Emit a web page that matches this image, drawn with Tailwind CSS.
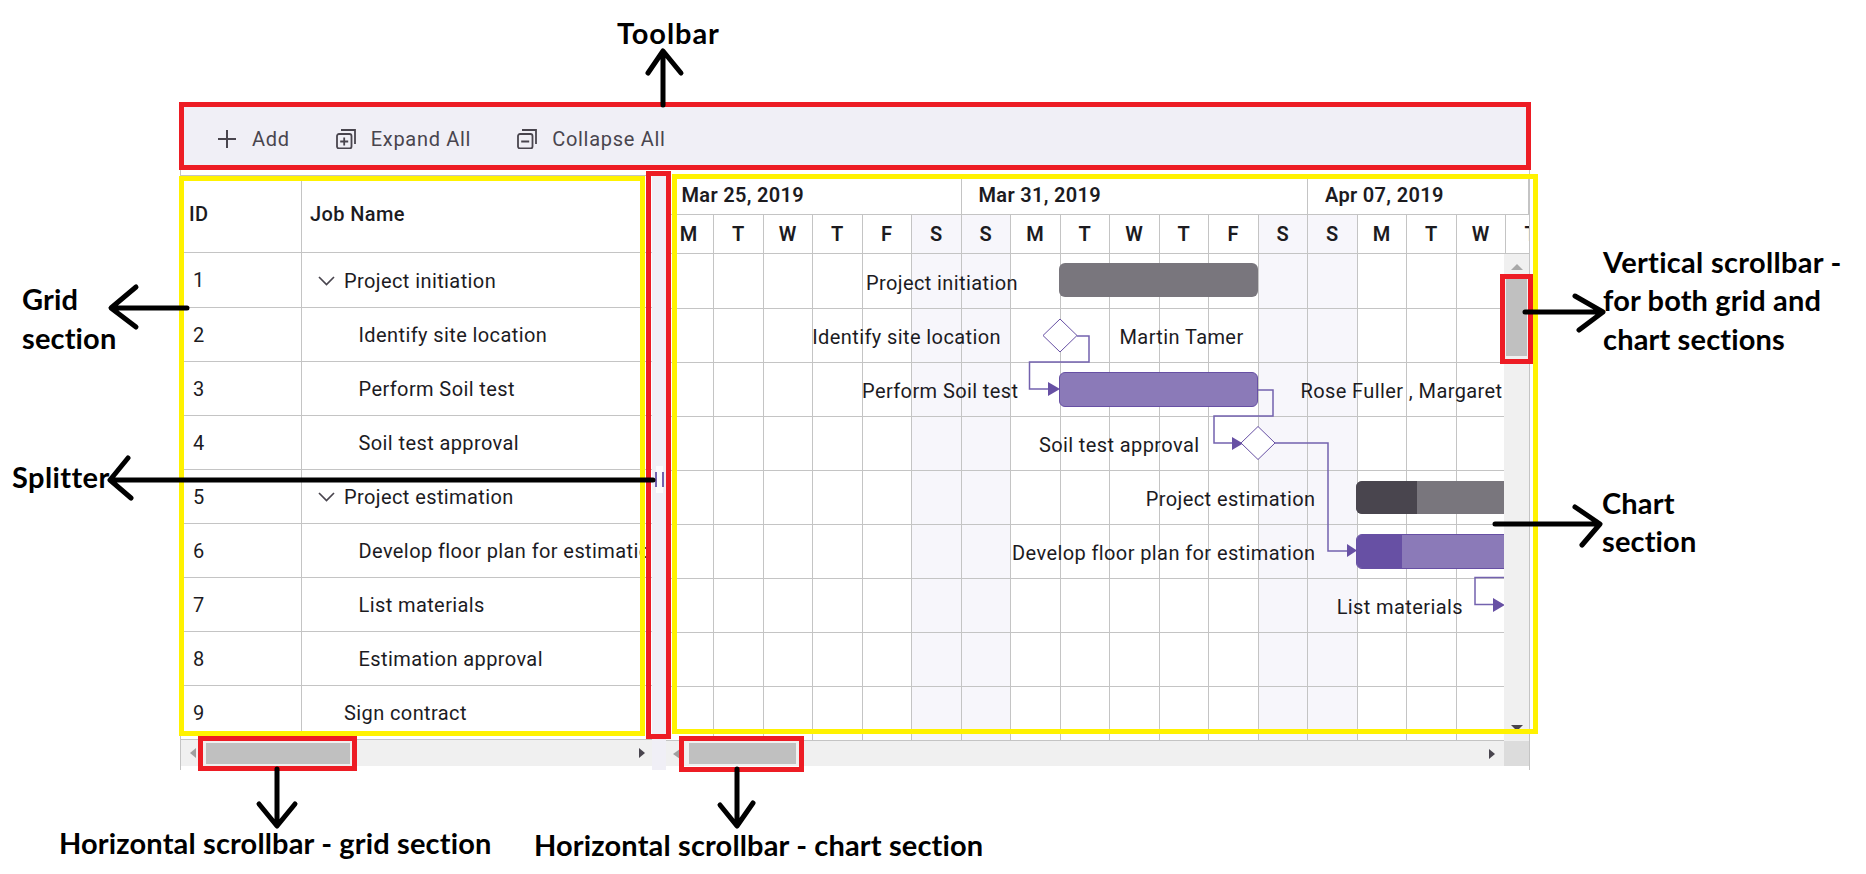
<!DOCTYPE html>
<html lang="en">
<head>
  <meta charset="UTF-8">
  <title>Gantt chart parts</title>
  <script src="https://cdn.jsdelivr.net/npm/@tailwindcss/browser@4"></script>
</head>
<body class="bg-white">
<div class="relative w-[1866px] h-[874px] overflow-hidden pt-[102px] pl-[180px] font-['Roboto',sans-serif] text-[20px] tracking-[0.4px] text-[#1c1b1f]">

  <!-- gantt -->
  <div class="w-[1350px] border-x border-[#c4c4c4]">
    <!-- toolbar -->
    <div class="h-[68px] pt-[5px] bg-[#f0eff6] flex items-center pl-[37px] gap-[46px] text-[#49454e] tracking-[0.7px]">
      <div class="flex items-center gap-[16px]">
        <svg width="18" height="18" viewBox="0 0 18 18" fill="none" stroke="#49454e" stroke-width="2"><path d="M9 0v18M0 9h18"/></svg>
        <span>Add</span>
      </div>
      <div class="flex items-center gap-[15px]">
        <svg width="20" height="20" viewBox="0 0 20 20" fill="none" stroke="#49454e" stroke-width="1.8"><rect x="1" y="5" width="14.5" height="14.5" rx="2"/><path d="M5 1h14v14M8.2 8.5v8M4.2 12.5h8"/></svg>
        <span>Expand All</span>
      </div>
      <div class="flex items-center gap-[15px]">
        <svg width="20" height="20" viewBox="0 0 20 20" fill="none" stroke="#49454e" stroke-width="1.8"><rect x="1" y="5" width="14.5" height="14.5" rx="2"/><path d="M5 1h14v14M4.2 12.5h8"/></svg>
        <span>Collapse All</span>
      </div>
    </div>
    <div class="h-[5px]"></div>

    <div class="flex h-[595px]">
      <!-- grid section -->
      <div class="w-[471px] flex flex-col">
        <div class="h-[78px] flex border-y border-[#c4c4c4] font-medium">
          <div class="w-[121px] border-r border-[#c4c4c4] pl-[8px] flex items-center">ID</div>
          <div class="pl-[8px] flex items-center">Job Name</div>
        </div>
        <div class="h-[55px] flex border-b border-[#c4c4c4] pt-[1px]">
          <div class="w-[121px] border-r border-[#c4c4c4] pl-[12px] flex items-center mt-[-1px]">1</div>
          <div class="w-[345px] pl-[16px] flex items-center gap-[9px] overflow-hidden whitespace-nowrap">
            <svg width="17" height="10" viewBox="0 0 17 10" fill="none" stroke="#49454e" stroke-width="1.7"><path d="M1 1l7.5 7.5L16 1"/></svg>
            <span>Project initiation</span>
          </div>
        </div>
        <div class="h-[54px] flex border-b border-[#c4c4c4] pt-[1px]">
          <div class="w-[121px] border-r border-[#c4c4c4] pl-[12px] flex items-center mt-[-1px]">2</div>
          <div class="w-[345px] pl-[56.5px] flex items-center overflow-hidden whitespace-nowrap">Identify site location</div>
        </div>
        <div class="h-[54px] flex border-b border-[#c4c4c4] pt-[1px]">
          <div class="w-[121px] border-r border-[#c4c4c4] pl-[12px] flex items-center mt-[-1px]">3</div>
          <div class="w-[345px] pl-[56.5px] flex items-center overflow-hidden whitespace-nowrap">Perform Soil test</div>
        </div>
        <div class="h-[54px] flex border-b border-[#c4c4c4] pt-[1px]">
          <div class="w-[121px] border-r border-[#c4c4c4] pl-[12px] flex items-center mt-[-1px]">4</div>
          <div class="w-[345px] pl-[56.5px] flex items-center overflow-hidden whitespace-nowrap">Soil test approval</div>
        </div>
        <div class="h-[54px] flex border-b border-[#c4c4c4] pt-[1px]">
          <div class="w-[121px] border-r border-[#c4c4c4] pl-[12px] flex items-center mt-[-1px]">5</div>
          <div class="w-[345px] pl-[16px] flex items-center gap-[9px] overflow-hidden whitespace-nowrap">
            <svg width="17" height="10" viewBox="0 0 17 10" fill="none" stroke="#49454e" stroke-width="1.7"><path d="M1 1l7.5 7.5L16 1"/></svg>
            <span>Project estimation</span>
          </div>
        </div>
        <div class="h-[54px] flex border-b border-[#c4c4c4] pt-[1px]">
          <div class="w-[121px] border-r border-[#c4c4c4] pl-[12px] flex items-center mt-[-1px]">6</div>
          <div class="w-[345px] pl-[56.5px] flex items-center overflow-hidden whitespace-nowrap">Develop floor plan for estimation</div>
        </div>
        <div class="h-[54px] flex border-b border-[#c4c4c4] pt-[1px]">
          <div class="w-[121px] border-r border-[#c4c4c4] pl-[12px] flex items-center mt-[-1px]">7</div>
          <div class="w-[345px] pl-[56.5px] flex items-center overflow-hidden whitespace-nowrap">List materials</div>
        </div>
        <div class="h-[54px] flex border-b border-[#c4c4c4] pt-[1px]">
          <div class="w-[121px] border-r border-[#c4c4c4] pl-[12px] flex items-center mt-[-1px]">8</div>
          <div class="w-[345px] pl-[56.5px] flex items-center overflow-hidden whitespace-nowrap">Estimation approval</div>
        </div>
        <div class="h-[54px] flex border-b border-[#c4c4c4] pt-[1px]">
          <div class="w-[121px] border-r border-[#c4c4c4] pl-[12px] flex items-center mt-[-1px]">9</div>
          <div class="w-[345px] pl-[42px] flex items-center overflow-hidden whitespace-nowrap">Sign contract</div>
        </div>
        <!-- grid scrollbar -->
        <div class="h-[26px] bg-[#f0f0f0] flex items-center">
          <svg class="ml-[9px]" width="6" height="10" viewBox="0 0 6 10"><path d="M6 0v10L0 5z" fill="#a0a0a0"/></svg>
          <div class="ml-[10px] w-[144px] h-[21px] bg-[#c0c0c0]"></div>
          <svg class="ml-auto mr-[7px]" width="6" height="10" viewBox="0 0 6 10"><path d="M0 0v10l6-5z" fill="#49454e"/></svg>
        </div>
      </div>

      <!-- splitter -->
      <div class="w-[14px] bg-[#f0eff6] flex flex-col items-center pt-[291px]">
        <div class="w-[7px] h-[27px] bg-[#fbfbfd]"></div>
      </div>

      <!-- chart section -->
      <div class="w-[863px] flex flex-col">
        <div class="h-[79px] overflow-hidden border-b border-[#c4c4c4] font-semibold tracking-[0.33px] text-[#1c1b1f]">
          <div class="h-[40px] flex ml-[-1.5px] border-b border-[#c4c4c4]">
            <div class="w-[297px] shrink-0 border-r border-[#c4c4c4] pl-[17px] flex items-center">Mar 25, 2019</div>
            <div class="w-[346.5px] shrink-0 border-r border-[#c4c4c4] pl-[17px] flex items-center">Mar 31, 2019</div>
            <div class="w-[221px] shrink-0 border-r border-[#c4c4c4] pl-[17px] flex items-center">Apr 07, 2019</div>
          </div>
          <div class="h-[38px] flex ml-[-1.5px] w-[866.5px] overflow-hidden border-r border-[#c4c4c4]">
            <div class="w-[49.5px] shrink-0 border-r border-[#c4c4c4] flex items-center justify-center">M</div>
            <div class="w-[49.5px] shrink-0 border-r border-[#c4c4c4] flex items-center justify-center">T</div>
            <div class="w-[49.5px] shrink-0 border-r border-[#c4c4c4] flex items-center justify-center">W</div>
            <div class="w-[49.5px] shrink-0 border-r border-[#c4c4c4] flex items-center justify-center">T</div>
            <div class="w-[49.5px] shrink-0 border-r border-[#c4c4c4] flex items-center justify-center">F</div>
            <div class="w-[49.5px] shrink-0 border-r border-[#c4c4c4] bg-[#f7f6fb] flex items-center justify-center">S</div>
            <div class="w-[49.5px] shrink-0 border-r border-[#c4c4c4] bg-[#f7f6fb] flex items-center justify-center">S</div>
            <div class="w-[49.5px] shrink-0 border-r border-[#c4c4c4] flex items-center justify-center">M</div>
            <div class="w-[49.5px] shrink-0 border-r border-[#c4c4c4] flex items-center justify-center">T</div>
            <div class="w-[49.5px] shrink-0 border-r border-[#c4c4c4] flex items-center justify-center">W</div>
            <div class="w-[49.5px] shrink-0 border-r border-[#c4c4c4] flex items-center justify-center">T</div>
            <div class="w-[49.5px] shrink-0 border-r border-[#c4c4c4] flex items-center justify-center">F</div>
            <div class="w-[49.5px] shrink-0 border-r border-[#c4c4c4] bg-[#f7f6fb] flex items-center justify-center">S</div>
            <div class="w-[49.5px] shrink-0 border-r border-[#c4c4c4] bg-[#f7f6fb] flex items-center justify-center">S</div>
            <div class="w-[49.5px] shrink-0 border-r border-[#c4c4c4] flex items-center justify-center">M</div>
            <div class="w-[49.5px] shrink-0 border-r border-[#c4c4c4] flex items-center justify-center">T</div>
            <div class="w-[49.5px] shrink-0 border-r border-[#c4c4c4] flex items-center justify-center">W</div>
            <div class="w-[49.5px] shrink-0 flex items-center justify-center">T</div>
          </div>
        </div>

        <div class="flex h-[487px]">
          <!-- timeline body -->
          <div class="relative w-[838px] overflow-hidden">
            <div class="absolute top-0 bottom-0 left-[-1.5px] flex">
              <div class="w-[49.5px] shrink-0 border-r border-[#c4c4c4]"></div>
              <div class="w-[49.5px] shrink-0 border-r border-[#c4c4c4]"></div>
              <div class="w-[49.5px] shrink-0 border-r border-[#c4c4c4]"></div>
              <div class="w-[49.5px] shrink-0 border-r border-[#c4c4c4]"></div>
              <div class="w-[49.5px] shrink-0 border-r border-[#c4c4c4]"></div>
              <div class="w-[49.5px] shrink-0 border-r border-[#c4c4c4] bg-[#f7f6fb]"></div>
              <div class="w-[49.5px] shrink-0 border-r border-[#c4c4c4] bg-[#f7f6fb]"></div>
              <div class="w-[49.5px] shrink-0 border-r border-[#c4c4c4]"></div>
              <div class="w-[49.5px] shrink-0 border-r border-[#c4c4c4]"></div>
              <div class="w-[49.5px] shrink-0 border-r border-[#c4c4c4]"></div>
              <div class="w-[49.5px] shrink-0 border-r border-[#c4c4c4]"></div>
              <div class="w-[49.5px] shrink-0 border-r border-[#c4c4c4]"></div>
              <div class="w-[49.5px] shrink-0 border-r border-[#c4c4c4] bg-[#f7f6fb]"></div>
              <div class="w-[49.5px] shrink-0 border-r border-[#c4c4c4] bg-[#f7f6fb]"></div>
              <div class="w-[49.5px] shrink-0 border-r border-[#c4c4c4]"></div>
              <div class="w-[49.5px] shrink-0 border-r border-[#c4c4c4]"></div>
              <div class="w-[49.5px] shrink-0 border-r border-[#c4c4c4]"></div>
            </div>
            <div class="relative">
              <div class="h-[55px] border-b border-[#c4c4c4]"></div>
              <div class="h-[54px] border-b border-[#c4c4c4]"></div>
              <div class="h-[54px] border-b border-[#c4c4c4]"></div>
              <div class="h-[54px] border-b border-[#c4c4c4]"></div>
              <div class="h-[54px] border-b border-[#c4c4c4]"></div>
              <div class="h-[54px] border-b border-[#c4c4c4]"></div>
              <div class="h-[54px] border-b border-[#c4c4c4]"></div>
              <div class="h-[54px] border-b border-[#c4c4c4]"></div>
              <div class="h-[54px] border-b border-[#c4c4c4]"></div>
            </div>

            <!-- taskbars -->
            <div class="absolute left-[393px] top-[9px] w-[199px] h-[34px] rounded-[6px] bg-[#79767d]"></div>
            <div class="absolute left-[393px] top-[118px] w-[199px] h-[35px] rounded-[6px] bg-[#8b7ab8] border border-[#6750a4]"></div>
            <div class="absolute left-[690px] top-[227px] w-[200px] h-[33px] rounded-[6px] bg-[#79767d] overflow-hidden"><div class="w-[61px] h-full bg-[#49454e]"></div></div>
            <div class="absolute left-[690px] top-[280px] w-[200px] h-[35px] rounded-[6px] bg-[#8b7ab8] border border-[#6750a4] overflow-hidden"><div class="w-[45px] h-full bg-[#6750a4]"></div></div>

            <!-- connectors and milestones -->
            <svg class="absolute left-0 top-0" width="838" height="486" viewBox="666 254 838 486" fill="none">
              <g stroke="#7362ae" stroke-width="1.5">
                <path d="M1077 336H1089V362H1029.5V389H1048"/>
                <path d="M1258 390H1273V416H1214V443H1232"/>
                <path d="M1275 443H1328V551H1347"/>
                <path d="M1504 577.5H1475V604.5H1493"/>
              </g>
              <g fill="#6750a4">
                <path d="M1048 382L1060 389L1048 396z"/>
                <path d="M1232 437L1243 443.5L1232 450z"/>
                <path d="M1347 544L1357 550.5L1347 557z"/>
                <path d="M1493 598L1505 605L1493 612z"/>
              </g>
              <path d="M1060 319L1077 335.5L1060 352L1043 335.5z" fill="#fff" stroke="#6750a4"/>
              <path d="M1258 426.5L1275 443L1258 459.5L1241 443z" fill="#fff" stroke="#6750a4"/>
            </svg>

            <!-- taskbar labels -->
            <span class="absolute right-[486px] top-[14px] leading-[30px] whitespace-nowrap">Project initiation</span>
            <span class="absolute right-[503px] top-[68px] leading-[30px] whitespace-nowrap">Identify site location</span>
            <span class="absolute left-[453.5px] top-[68px] leading-[30px] whitespace-nowrap">Martin Tamer</span>
            <span class="absolute right-[485.5px] top-[122px] leading-[30px] whitespace-nowrap">Perform Soil test</span>
            <span class="absolute left-[634.5px] top-[122px] leading-[30px] whitespace-nowrap">Rose Fuller , Margaret</span>
            <span class="absolute right-[304.5px] top-[176px] leading-[30px] whitespace-nowrap">Soil test approval</span>
            <span class="absolute right-[188.5px] top-[230px] leading-[30px] whitespace-nowrap">Project estimation</span>
            <span class="absolute right-[188.5px] top-[284px] leading-[30px] whitespace-nowrap">Develop floor plan for estimation</span>
            <span class="absolute right-[41px] top-[338px] leading-[30px] whitespace-nowrap">List materials</span>
          </div>

          <!-- vertical scrollbar -->
          <div class="w-[25px] bg-[#f0f0f0] flex flex-col items-center">
            <svg class="mt-[10px]" width="12" height="6" viewBox="0 0 12 6"><path d="M0 6h12L6 0z" fill="#a8a8a8"/></svg>
            <div class="mt-[9px] w-[21px] h-[77px] bg-[#c0c0c0]"></div>
            <svg class="mt-auto mb-[10px]" width="12" height="6" viewBox="0 0 12 6"><path d="M0 0h12L6 6z" fill="#49454e"/></svg>
          </div>
        </div>

        <!-- chart scrollbar -->
        <div class="flex h-[25px]">
          <div class="w-[838px] bg-[#f0f0f0] flex items-center">
            <svg class="ml-[7px]" width="7" height="10" viewBox="0 0 7 10"><path d="M7 0v10L0 5z" fill="#a0a0a0"/></svg>
            <div class="ml-[9px] w-[107px] h-[21px] bg-[#c0c0c0]"></div>
            <svg class="ml-auto mr-[9px]" width="6" height="10" viewBox="0 0 6 10"><path d="M0 0v10l6-5z" fill="#49454e"/></svg>
          </div>
          <div class="w-[25px] bg-[#dcdcdc]"></div>
        </div>
      </div>
    </div>
  </div>

  <!-- splitter grip -->
  <div class="absolute left-[654.5px] top-[472px] w-[2px] h-[15px] bg-[#7362ae]"></div>
  <div class="absolute left-[661.5px] top-[472px] w-[2px] h-[15px] bg-[#7362ae]"></div>

  <!-- annotation frames -->
  <div class="absolute left-[179px] top-[176px] w-[466px] h-[560px] border-[5px] border-[#fff200]"></div>
  <div class="absolute left-[672px] top-[174px] w-[866px] h-[560px] border-[5px] border-[#fff200]"></div>
  <div class="absolute left-[179px] top-[102px] w-[1352px] h-[68px] border-[5px] border-[#ed1c24]"></div>
  <div class="absolute left-[646px] top-[171px] w-[25px] h-[568px] border-[5px] border-[#ed1c24]"></div>
  <div class="absolute left-[1500px] top-[274px] w-[33px] h-[90px] border-[5px] border-[#ed1c24]"></div>
  <div class="absolute left-[198px] top-[736px] w-[159px] h-[35px] border-[5px] border-[#ed1c24]"></div>
  <div class="absolute left-[679px] top-[736px] w-[125px] h-[36px] border-[5px] border-[#ed1c24]"></div>

  <!-- annotation arrows -->
  <svg class="absolute left-0 top-0" width="1866" height="874" viewBox="0 0 1866 874" fill="none" stroke="#000" stroke-width="5" stroke-linecap="round" stroke-linejoin="round">
    <path d="M663 105V52M648 73L663 51L681 73"/>
    <path d="M187 308H112M136 287L111 308L136 327"/>
    <path d="M653 480H111M128 458L110 480L131 498"/>
    <path d="M277 769V825M259 804L277 826L295 804"/>
    <path d="M737 769V825M720 805L737 826L753 803"/>
    <path d="M1525 312H1602M1575 296L1603 312L1579 330"/>
    <path d="M1495 524H1599M1575 507L1600 524L1582 545"/>
  </svg>

  <!-- annotation labels -->
  <div class="font-['Lato',sans-serif] font-bold text-black text-[29px] leading-[30px] tracking-[0.15px]">
    <span class="absolute left-[617px] top-[18px] tracking-[0.9px]">Toolbar</span>
    <span class="absolute left-[22px] top-[284px]">Grid</span>
    <span class="absolute left-[22px] top-[323px]">section</span>
    <span class="absolute left-[12px] top-[462px] tracking-[0.4px]">Splitter</span>
    <span class="absolute left-[1603px] top-[247px] whitespace-nowrap tracking-[0.3px]">Vertical scrollbar -</span>
    <span class="absolute left-[1603px] top-[285px] whitespace-nowrap">for both grid and</span>
    <span class="absolute left-[1603px] top-[324px] whitespace-nowrap">chart sections</span>
    <span class="absolute left-[1602px] top-[488px]">Chart</span>
    <span class="absolute left-[1602px] top-[526px]">section</span>
    <span class="absolute left-[59px] top-[828px] whitespace-nowrap">Horizontal scrollbar - grid section</span>
    <span class="absolute left-[534px] top-[830px] whitespace-nowrap">Horizontal scrollbar - chart section</span>
  </div>
</div>
</body>
</html>
